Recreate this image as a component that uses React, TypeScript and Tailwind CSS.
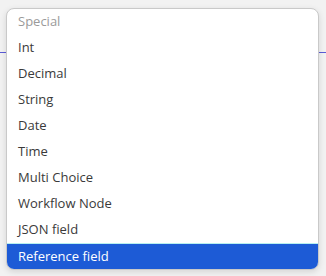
import React from "react";

const items = [
  "Int",
  "Decimal",
  "String",
  "Date",
  "Time",
  "Multi Choice",
  "Workflow Node",
  "JSON field",
];

export default function App() {
  return (
    <div
      className="relative w-[326px] h-[276px] bg-[#f2f2f2] overflow-hidden"
      style={{ fontFamily: '"Open Sans", "Noto Sans", sans-serif' }}
    >
      <div className="pt-[52px]">
        <div className="h-[1px] bg-[#5b5bd6]" />
      </div>
      <div className="absolute left-[6px] top-[8px] w-[313px] bg-white border border-[#c9c9c9] rounded-[8px] shadow-[0_2px_6px_rgba(0,0,0,0.12)] overflow-hidden">
        <div className="h-[26px] flex items-center pl-[11px] text-[13px] text-[#9a9a9a]">
          Special
        </div>
        {items.map((t) => (
          <div
            key={t}
            className="h-[26px] flex items-center pl-[11px] text-[13px] text-[#3a3a3a]"
          >
            {t}
          </div>
        ))}
        <div className="h-[26px] flex items-center pl-[11px] text-[13px] text-white bg-[#1d5bd6] border-t border-[#b6f0f0]">
          Reference field
        </div>
      </div>
    </div>
  );
}
